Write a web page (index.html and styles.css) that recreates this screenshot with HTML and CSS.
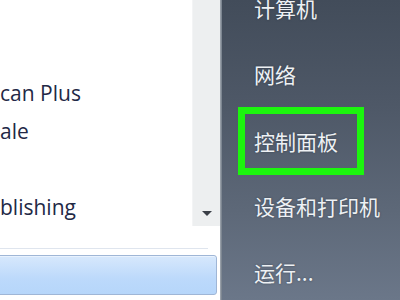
FILE: index.html
```html
<!DOCTYPE html>
<html lang="zh-CN">
<head>
<meta charset="utf-8">
<link rel="stylesheet" href="styles.css">
</head>
<body>
<div class="menu">
  <div class="left">
    <div class="programs">
      <ul class="prog-list">
        <li>can Plus</li>
        <li>ale</li>
        <li></li>
        <li>blishing</li>
      </ul>
      <div class="scrollbar">
        <span class="arrow"></span>
      </div>
    </div>
    <div class="sep"></div>
    <div class="search"></div>
  </div>
  <div class="edge"></div>
  <div class="right">
    <ul class="links">
      <li>计算机</li>
      <li>网络</li>
      <li class="hl">控制面板</li>
      <li>设备和打印机</li>
      <li>运行...</li>
    </ul>
  </div>
</div>
</body>
</html>
```
FILE: styles.css
```css
html, body {
  margin: 0;
  padding: 0;
  width: 400px;
  height: 300px;
  overflow: hidden;
}
.menu {
  display: flex;
  width: 400px;
  height: 300px;
}
.left {
  width: 220px;
  background: #ffffff;
  display: flex;
  flex-direction: column;
}
.programs {
  display: flex;
  height: 226px;
}
.prog-list {
  list-style: none;
  margin: 0;
  padding: 74px 0 0 0;
  width: 192px;
  font-family: "Open Sans", "Noto Sans", sans-serif;
  font-size: 21px;
  color: #222846;
}
.prog-list li {
  height: 38px;
  line-height: 38px;
  white-space: nowrap;
}
.scrollbar {
  width: 28px;
  background: #edeff0;
  border-left: 1px solid #f3f4f5;
  display: flex;
  align-items: flex-end;
  justify-content: center;
  padding-bottom: 10px;
  box-sizing: border-box;
}
.arrow {
  width: 0;
  height: 0;
  border-left: 5px solid transparent;
  border-right: 5px solid transparent;
  border-top: 5px solid #3a3f47;
}
.sep {
  margin-top: 22px;
  height: 1px;
  width: 208px;
  background: #dfe5ee;
}
.search {
  margin-top: 6px;
  margin-left: -4px;
  width: 221px;
  height: 40px;
  box-sizing: border-box;
  border: 1px solid #9fb6d6;
  border-radius: 3px;
  background: linear-gradient(#d7e8fc, #bcd9fb 60%, #b6d6fa);
  box-shadow: inset 0 1px 0 #e8f2fe;
}
.edge {
  width: 2px;
  background: linear-gradient(90deg, #a4abb3, #707a86);
}
.right {
  flex: 1;
  background: linear-gradient(180deg, #424c5a 0%, #4e5867 35%, #5d6878 70%, #6b7789 100%);
  overflow: hidden;
}
.links {
  list-style: none;
  margin: -25px 0 0 0;
  padding: 0;
  font-family: "Noto Sans CJK SC", "Noto Sans", sans-serif;
  font-size: 21px;
  color: #eef1f4;
  text-shadow: 0 0 2px rgba(30, 40, 55, 0.6);
}
.links li {
  height: 66px;
  line-height: 66px;
  padding-left: 32px;
  white-space: nowrap;
}
.links li.hl {
  width: 126px;
  height: 68px;
  line-height: 54px;
  margin: 0 0 -2px 16px;
  padding-left: 9px;
  box-sizing: border-box;
  border: 7px solid #1cf50e;
}
```
